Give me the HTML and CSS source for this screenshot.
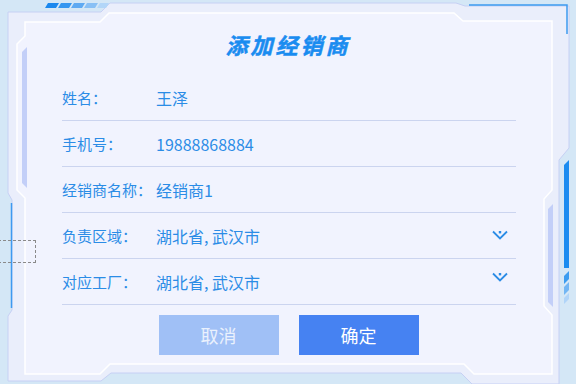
FILE: index.html
```html
<!DOCTYPE HTML>
<html>

<head>
    <meta charset="utf-8">

    <link rel="stylesheet" href="styles.css">

</head>

<body>

<div class="dialog">

    <!-- декоративная рамка -->
    <svg class="frame" width="576" height="384" viewBox="0 0 576 384">
        <polygon points="8,12 101,12 110,3 456,3 465,6 569,6 569,148 559,160 559,384 472,384 461,373 111,373 101,381 8,381 8,316 12,310 12,200 8,193"
                 fill="#eaeefb" stroke="#c6d0f4" stroke-width="1"/>
        <polygon points="25,22 100,22 109,13 454,13 463,21 552,21 552,190 544,199 544,306 552,315 552,374 474,374 464,364 110,364 100,374 25,374 25,198 17,190 17,44 25,36"
                 fill="#f1f3fe" stroke="#ffffff" stroke-width="1.5"/>

        <polyline points="469,5 567,5 567,34" fill="none" stroke="#3d9af0" stroke-width="1.5"/>
        <line x1="11.5" y1="203" x2="11.5" y2="308" stroke="#3d9af0" stroke-width="1.5"/>

        <polygon points="22,52 27,47 27,188 22,183" fill="#c3cff8"/>
        <polygon points="548,209 553,204 553,307 548,302" fill="#c3cff8"/>

        <polygon points="564,165 569,160 569,268 564,268" fill="#1a8cf0"/>
        <polygon points="564,276 569,271 569,279 564,284" fill="#3a9cf0"/>
        <polygon points="564,287 569,282 569,290 564,295" fill="#72b6f4"/>
        <polygon points="564,298 569,293 569,299 564,304" fill="#b0d4f8"/>

        <polygon points="48,3 59,3 56,8 45,8" fill="#1a88ee"/>
        <polygon points="61,3 72,3 69,8 58,8" fill="#3496f0"/>
        <polygon points="74,3 85,3 82,8 71,8" fill="#5eaaf2"/>
        <polygon points="87,3 98,3 95,8 84,8" fill="#88c0f5"/>
        <polygon points="100,3 109,3 106,8 97,8" fill="#b2d6f8"/>
    </svg>

    <div class="content">
        <h1 class="title">添加经销商</h1>

        <div class="form">
            <div class="row">
                <span class="label">姓名：</span>
                <span class="value">王泽</span>
            </div>
            <div class="row">
                <span class="label">手机号：</span>
                <span class="value">19888868884</span>
            </div>
            <div class="row">
                <span class="label">经销商名称：</span>
                <span class="value">经销商1</span>
            </div>
            <div class="row">
                <span class="label">负责区域：</span>
                <span class="value">湖北省, 武汉市</span>
                <svg class="arrow" width="16" height="10" viewBox="0 0 16 10">
                    <polyline points="1,1.5 8,8.5 15,1.5" fill="none" stroke="#2b8ce6" stroke-width="1.8"/>
                    <rect x="6.8" y="1" width="2.4" height="2.4" fill="#2b8ce6"/>
                </svg>
            </div>
            <div class="row">
                <span class="label">对应工厂：</span>
                <span class="value">湖北省, 武汉市</span>
                <svg class="arrow arrow-up" width="16" height="10" viewBox="0 0 16 10">
                    <polyline points="1,1.5 8,8.5 15,1.5" fill="none" stroke="#2b8ce6" stroke-width="1.8"/>
                    <rect x="6.8" y="1" width="2.4" height="2.4" fill="#2b8ce6"/>
                </svg>
            </div>
        </div>

        <div class="buttons">
            <button class="btn btn-cancel">取消</button>
            <button class="btn btn-ok">确定</button>
        </div>
    </div>

    <div class="dashed"></div>

</div>

</body>

</html>
```

FILE: styles.css
```css
/* общие стили */

body {
    margin: 0;
    background-color: #d4e7f6;
    font-family: "Noto Sans CJK SC", "Noto Sans", sans-serif;
}

.dialog {
    position: relative;
    width: 576px;
    height: 384px;
    overflow: hidden;
}

.frame {
    position: absolute;
    left: 0;
    top: 0;
}

.content {
    position: relative;
    padding-top: 29px;
}

.title {
    margin: 0;
    height: 30px;
    line-height: 30px;
    text-align: center;
    font-size: 22px;
    font-weight: bold;
    font-style: italic;
    letter-spacing: 3px;
    color: #1a8cf0;
    -webkit-text-stroke: 0.5px #1a8cf0;
}

.form {
    margin: 16px 0 0 62px;
    width: 454px;
}

.row {
    display: flex;
    align-items: center;
    height: 45px;
    border-bottom: 1px solid #cbd4ef;
    font-size: 15px;
    color: #2b8ce6;
}

.label {
    width: 94px;
    white-space: nowrap;
}

.value {
    flex: 1;
    font-size: 16px;
}

.arrow {
    margin-right: 8px;
    margin-top: -2px;
}

.arrow-up {
    margin-top: -10px;
}

.buttons {
    display: flex;
    justify-content: center;
    gap: 20px;
    margin-top: 10px;
    padding-left: 1px;
}

.btn {
    width: 120px;
    height: 40px;
    border: none;
    padding: 0;
    font-family: "Noto Sans CJK SC", "Noto Sans", sans-serif;
    font-size: 18px;
    color: #ffffff;
}

.btn-cancel {
    background-color: #a0c0f6;
    color: #eaf1fd;
}

.btn-ok {
    background-color: #4682f2;
}

.dashed {
    position: absolute;
    left: -2px;
    top: 240px;
    width: 36px;
    height: 21px;
    border: 1px dashed #8a8a8a;
}
```
